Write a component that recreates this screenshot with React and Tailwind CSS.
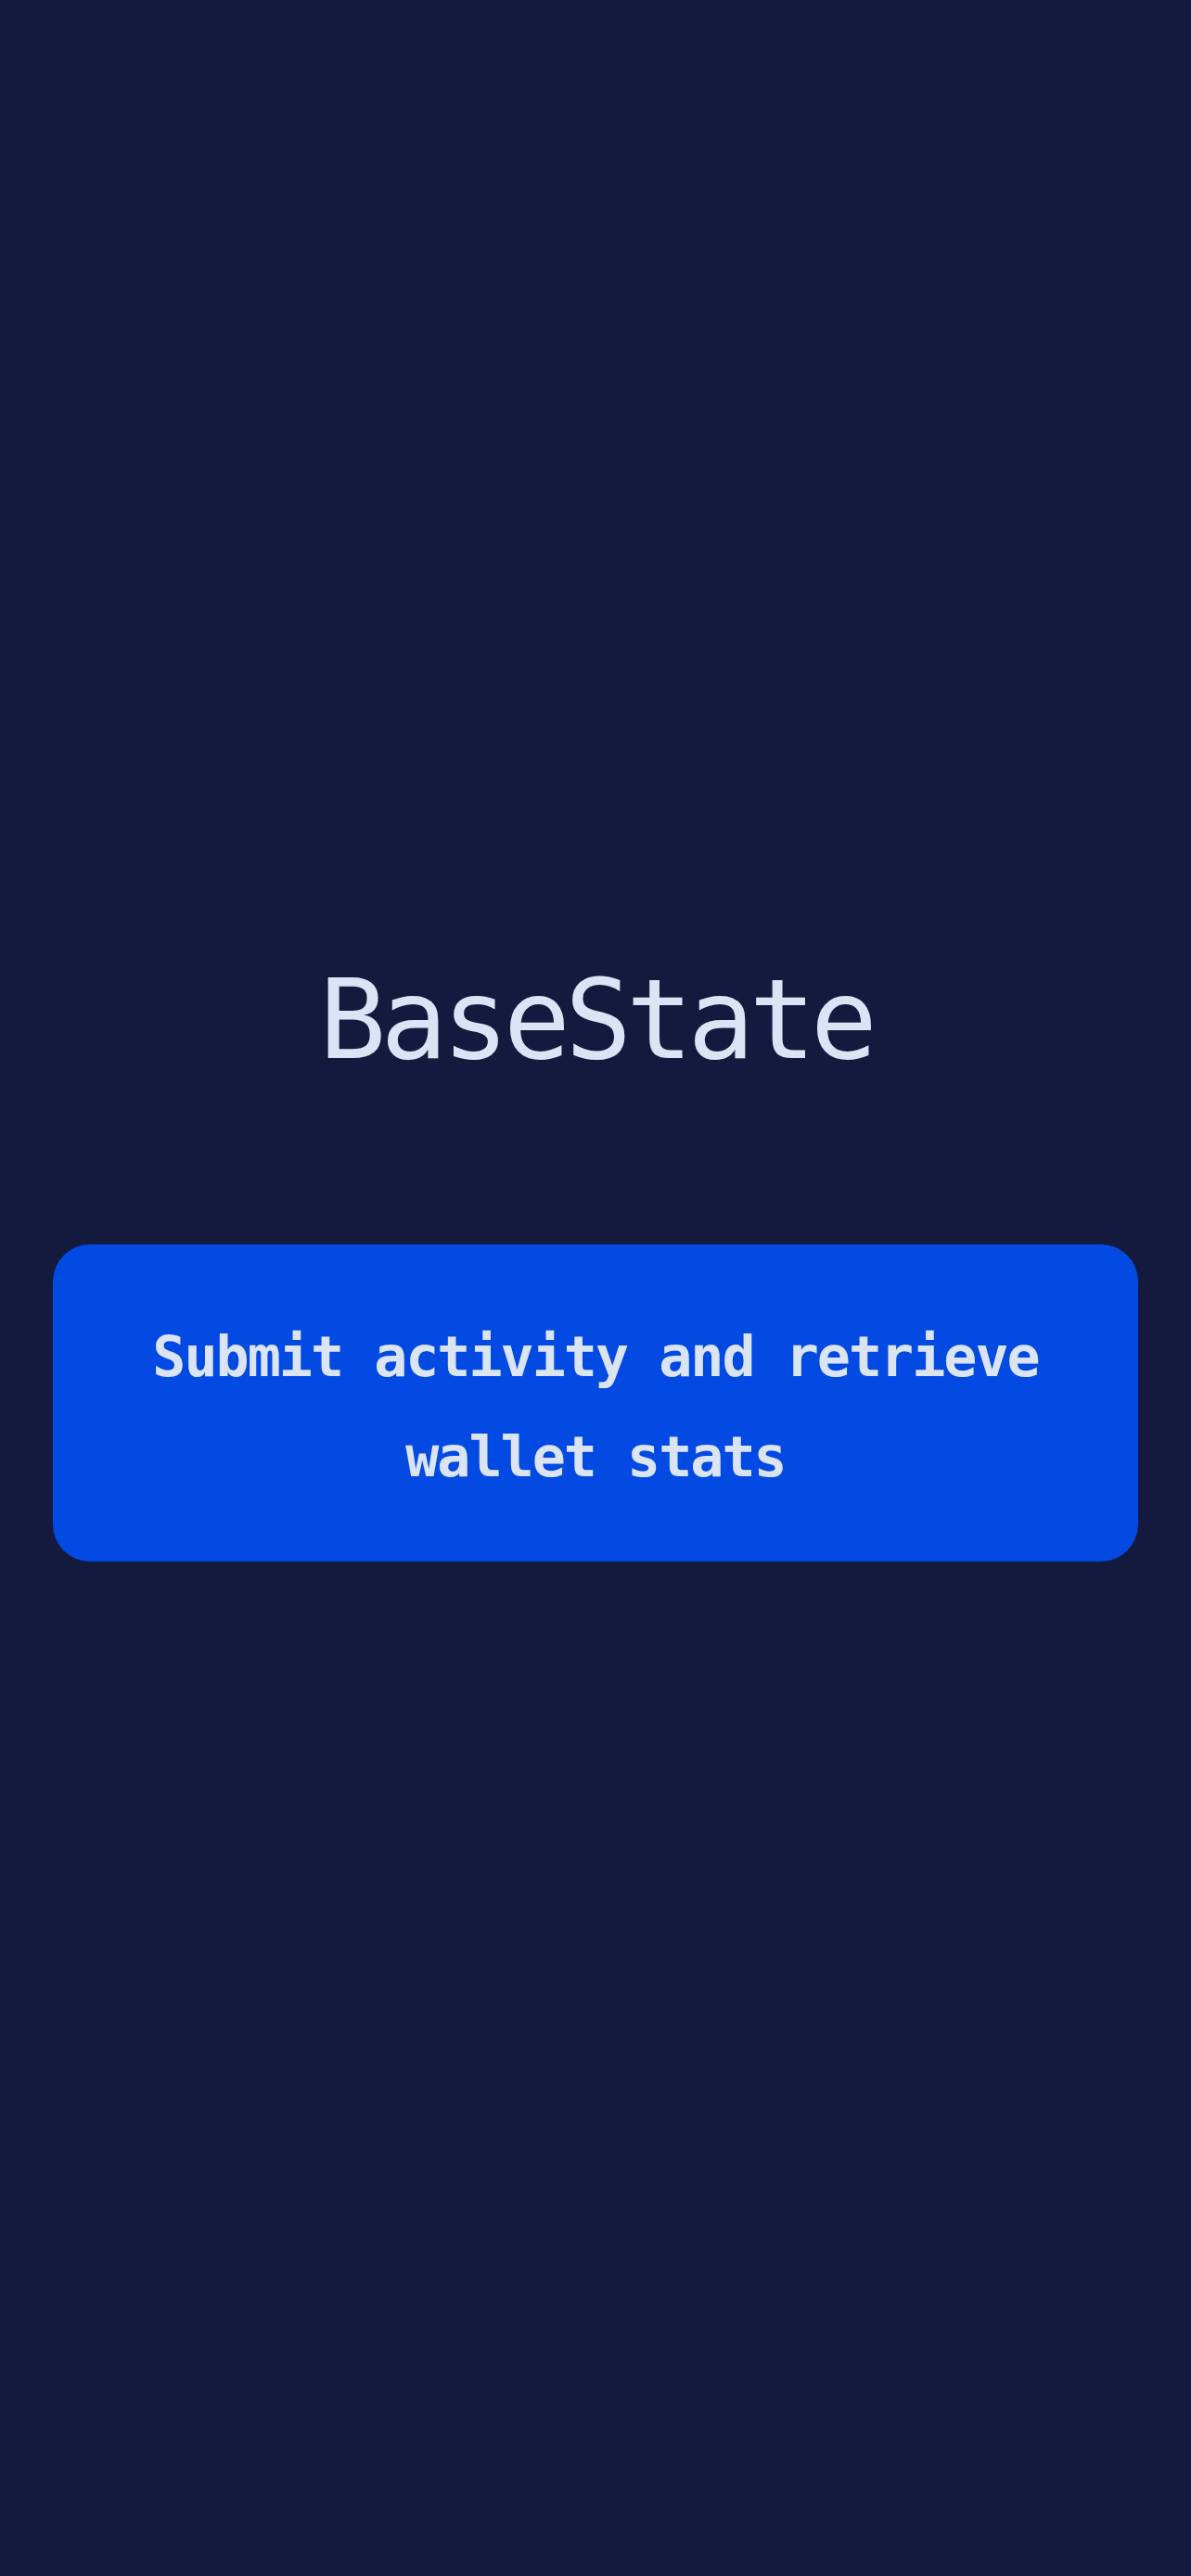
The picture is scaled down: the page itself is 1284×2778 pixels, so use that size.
export default function App() {
  return (
    <div
      className="min-h-screen w-full bg-[#131a3e] flex flex-col items-center justify-center px-[57px] pb-[54px]"
      style={{ fontFamily: '"DejaVu Sans Mono", "Liberation Mono", monospace' }}
    >
      {/* Title */}
      <h1 className="text-[120px] leading-none tracking-[-6px] font-normal text-[#dbe4f4]">
        BaseState
      </h1>

      {/* Action */}
      <button className="mt-[182px] w-full rounded-[40px] bg-[#034ae2] px-[40px] pt-[67px] pb-[59px] text-center text-[60px] leading-[108px] tracking-[-2px] font-bold text-[#dbe4f4]">
        Submit activity and retrieve wallet stats
      </button>
    </div>
  );
}
